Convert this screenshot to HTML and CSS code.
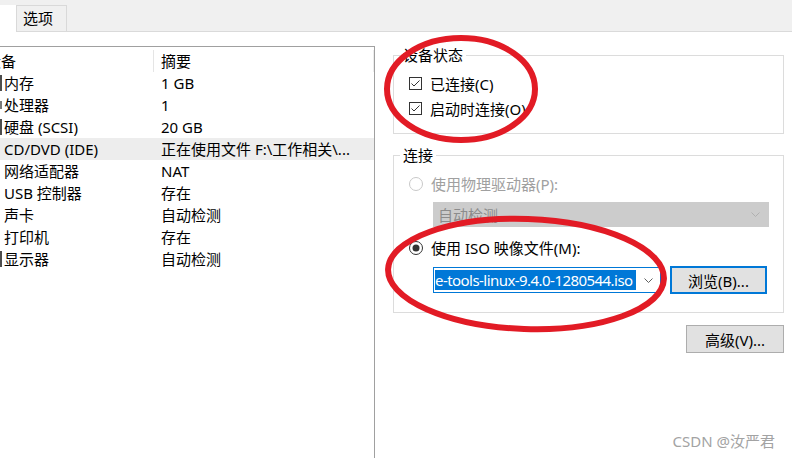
FILE: index.html
```html
<!DOCTYPE html>
<html lang="zh-CN">
<head>
  <meta charset="UTF-8">
  <title>虚拟机设置</title>
  <link rel="stylesheet" href="styles.css">
</head>
<body>

<div class="tabs">
  <div class="tab-active"></div>
  <div class="tab">选项</div>
</div>

<div class="main">
  <div class="devices">
    <div class="list-head">
      <span class="head-name">设备</span>
      <span class="head-sum">摘要</span>
    </div>
    <ul class="list">
      <li class="row"><span class="name"><i class="ico ico-edge"></i>内存</span><span class="sum">1 GB</span></li>
      <li class="row"><span class="name"><i class="ico ico-dot"></i>处理器</span><span class="sum">1</span></li>
      <li class="row"><span class="name"><i class="ico ico-edge"></i>硬盘 (SCSI)</span><span class="sum">20 GB</span></li>
      <li class="row sel"><span class="name"><i class="ico"></i>CD/DVD (IDE)</span><span class="sum">正在使用文件 F:\工作相关\...</span></li>
      <li class="row"><span class="name"><i class="ico"></i>网络适配器</span><span class="sum">NAT</span></li>
      <li class="row"><span class="name"><i class="ico"></i>USB 控制器</span><span class="sum">存在</span></li>
      <li class="row"><span class="name"><i class="ico"></i>声卡</span><span class="sum">自动检测</span></li>
      <li class="row"><span class="name"><i class="ico"></i>打印机</span><span class="sum">存在</span></li>
      <li class="row"><span class="name"><i class="ico ico-edge"></i>显示器</span><span class="sum">自动检测</span></li>
    </ul>
  </div>

  <div class="settings">
    <fieldset class="group">
      <legend>设备状态</legend>
      <label class="opt">
        <svg class="box" width="13" height="13" viewBox="0 0 13 13"><rect x="0.5" y="0.5" width="12" height="12" fill="#fff" stroke="#333"/><path d="M2.5 6.5 L5 9 L10.5 3.5" fill="none" stroke="#333"/></svg>
        已连接(C)
      </label>
      <label class="opt">
        <svg class="box" width="13" height="13" viewBox="0 0 13 13"><rect x="0.5" y="0.5" width="12" height="12" fill="#fff" stroke="#333"/><path d="M2.5 6.5 L5 9 L10.5 3.5" fill="none" stroke="#333"/></svg>
        启动时连接(O)
      </label>
    </fieldset>

    <fieldset class="group group-conn">
      <legend>连接</legend>
      <label class="opt disabled">
        <svg class="box" width="14" height="14" viewBox="0 0 14 14"><circle cx="7" cy="7" r="6.5" fill="#fff" stroke="#c8c8c8"/></svg>
        使用物理驱动器(P):
      </label>
      <div class="select-off">
        <span>自动检测</span>
        <svg width="9" height="5" viewBox="0 0 9 5"><path d="M0.5 0.5 L4.5 4.5 L8.5 0.5" fill="none" stroke="#b0b0b0"/></svg>
      </div>
      <label class="opt opt-iso">
        <svg class="box" width="14" height="14" viewBox="0 0 14 14"><circle cx="7" cy="7" r="6.5" fill="#fff" stroke="#333"/><circle cx="7" cy="7" r="3.5" fill="#333"/></svg>
        使用 ISO 映像文件(M):
      </label>
      <div class="iso-row">
        <div class="combo">
          <span class="combo-text">e-tools-linux-9.4.0-1280544.iso</span>
          <svg class="combo-arrow" width="9" height="5" viewBox="0 0 9 5"><path d="M0.5 0.5 L4.5 4.5 L8.5 0.5" fill="none" stroke="#606060"/></svg>
        </div>
        <button class="btn btn-default">浏览(B)...</button>
      </div>
    </fieldset>

    <button class="btn btn-adv">高级(V)...</button>
  </div>
</div>

<svg class="marks" width="792" height="458" viewBox="0 0 792 458">
  <ellipse cx="461" cy="89" rx="74" ry="51" fill="none" stroke="#e21b25" stroke-width="6"/>
  <ellipse cx="526" cy="274" rx="138" ry="55" fill="none" stroke="#e21b25" stroke-width="6" transform="rotate(2 526 274)"/>
</svg>

<div class="watermark">CSDN @汝严君</div>

</body>
</html>
```

FILE: styles.css
```css
body {
  margin: 0;
  width: 792px;
  height: 458px;
  overflow: hidden;
  position: relative;
  font-family: "Noto Sans", "Noto Sans CJK SC", sans-serif;
  font-size: 15px;
  color: #000;
  background: #fff;
}

/* tab strip */
.tabs {
  display: flex;
  align-items: flex-end;
  height: 32px;
  background: #f0f0f0;
  border-bottom: 1px solid #dadada;
  box-sizing: border-box;
}
.tab-active {
  width: 16px;
  height: 27px;
  margin-bottom: -1px;
  background: #fff;
  border-right: 1px solid #d9d9d9;
}
.tab {
  height: 26px;
  padding: 0 13px 0 6px;
  border-right: 1px solid #d9d9d9;
  border-top: 1px solid #d9d9d9;
  box-sizing: border-box;
  line-height: 25px;
}

.main {
  display: flex;
  height: 426px;
}

/* device list */
.devices {
  width: 375px;
  margin-top: 14px;
  border-top: 1px solid #a0a0a0;
  border-right: 1px solid #a0a0a0;
  box-sizing: border-box;
  overflow: hidden;
}
.list-head {
  display: grid;
  grid-template-columns: 168px 1fr;
  margin-left: -14px;
  height: 25px;
}
.list-head span {
  margin-top: 3px;
  line-height: 22px;
}
.head-name {
  border-right: 1px solid #e5e5e5;
}
.head-sum {
  padding-left: 7px;
  border-right: 1px solid #ececec;
}
.list {
  list-style: none;
  margin: 0;
  padding: 0;
}
.row {
  display: grid;
  grid-template-columns: 168px 1fr;
  margin-left: -14px;
  height: 22px;
  line-height: 22px;
  white-space: nowrap;
}
.row.sel {
  background: #ededed;
}
.name {
  display: flex;
  align-items: center;
  gap: 2px;
}
.sum {
  padding-left: 7px;
}
.ico {
  width: 16px;
  height: 16px;
  flex: none;
}
.ico-edge {
  background: linear-gradient(to right, transparent 14px, #4d4d4d 14px);
}
.ico-dot {
  background: linear-gradient(to right, transparent 14px, #7a7a7a 14px);
  height: 8px;
}

/* right side */
.settings {
  flex: 1;
  display: flex;
  flex-direction: column;
  padding: 0 8px 0 18px;
}
.group {
  margin: 13px 0 0;
  padding: 6px 0 12px;
  border: 1px solid #dcdcdc;
  min-width: 0;
}
.group legend {
  margin-left: 6px;
  padding: 0 3px;
  line-height: 20px;
}
.group-conn {
  margin-top: 11px;
  padding-bottom: 17px;
}
.opt {
  display: flex;
  align-items: center;
  gap: 8px;
  height: 25px;
  padding-left: 15px;
}
.opt .box {
  flex: none;
}
.disabled {
  color: #a0a0a0;
}
.select-off {
  display: flex;
  align-items: center;
  justify-content: space-between;
  height: 25px;
  margin: 6px 14px 0 39px;
  padding: 0 8px 0 4px;
  background: #cccccc;
  border: 1px solid #cccccc;
  box-sizing: border-box;
  color: #8c8c8c;
}
.opt-iso {
  margin-top: 8px;
}
.iso-row {
  display: flex;
  align-items: center;
  gap: 9px;
  height: 30px;
  margin: 5px 0 0 39px;
}
.combo {
  display: flex;
  align-items: center;
  width: 228px;
  height: 26px;
  padding-left: 1px;
  border: 1px solid #0078d7;
  box-sizing: border-box;
}
.combo-text {
  width: 201px;
  overflow: hidden;
  white-space: nowrap;
  background: #0078d7;
  color: #fff;
  line-height: 20px;
  letter-spacing: -0.55px;
}
.combo-arrow {
  margin-left: auto;
  margin-right: 7px;
}
.btn {
  width: 97px;
  height: 28px;
  padding: 0;
  background: #e1e1e1;
  border: 1px solid #adadad;
  box-sizing: border-box;
  font: inherit;
  color: #000;
}
.btn-default {
  border: 2px solid #0078d7;
}
.btn-adv {
  align-self: flex-end;
  width: 98px;
  margin-top: 12px;
}

/* annotations */
.marks {
  position: absolute;
  left: 0;
  top: 0;
  pointer-events: none;
}
.watermark {
  position: absolute;
  right: 17px;
  top: 430px;
  color: #a3a3a3;
  font-size: 15px;
}
```
